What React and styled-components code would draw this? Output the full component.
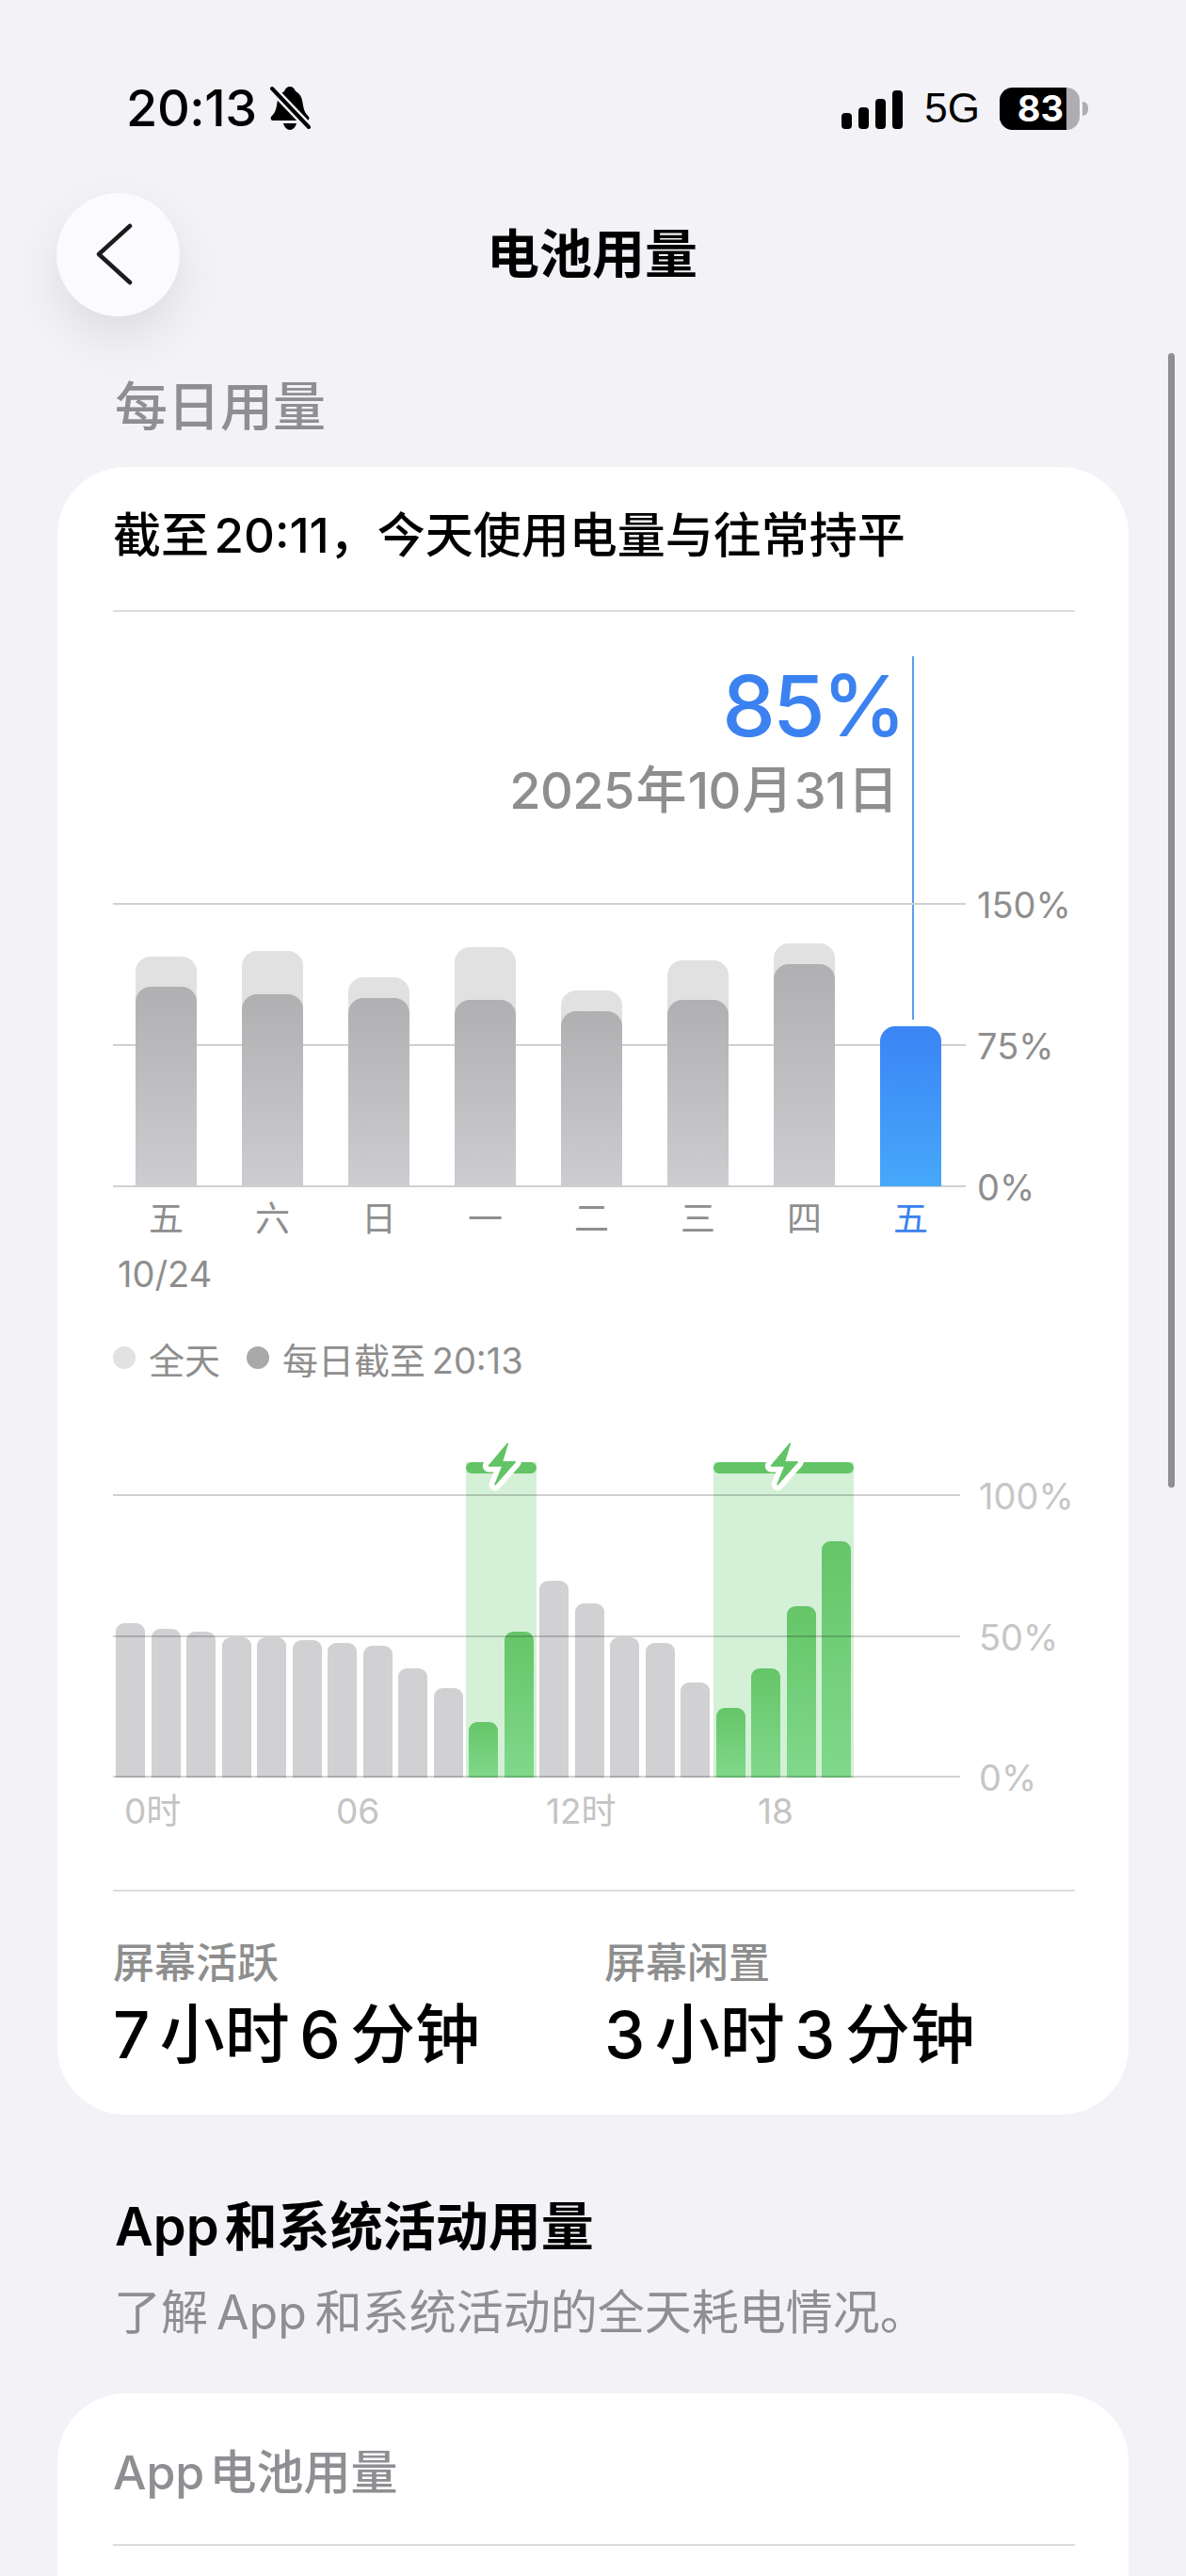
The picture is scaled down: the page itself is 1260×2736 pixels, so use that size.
import React from 'react';
import styled, { createGlobalStyle } from 'styled-components';

const Global = createGlobalStyle`
  html, body { margin: 0; padding: 0; background: #f2f2f7; }
  * { box-sizing: border-box; }
`;

const FONT = `Inter, "Noto Sans CJK SC", "Noto Sans", sans-serif`;

const Page = styled.div`
  position: relative;
  width: 1260px;
  height: 2736px;
  overflow: hidden;
  background: #f2f2f7;
  font-family: ${FONT};
  color: #000;
`;

const StatusBar = styled.div`
  height: 204px;
  padding: 92px 104px 0 134px;
  display: flex;
  justify-content: space-between;
  align-items: flex-start;
`;
const TimeGroup = styled.div`
  display: flex;
  align-items: center;
  gap: 13px;
  height: 46px;
`;
const Clock = styled.span`
  font-size: 54px;
  font-weight: 500;
  line-height: 46px;
  letter-spacing: -0.4px;
`;
const StatusRight = styled.div`
  display: flex;
  align-items: center;
  height: 46px;
`;
const Signal = styled.div`
  display: flex;
  align-items: flex-end;
  gap: 7px;
  height: 41px;
  margin-top: 2px;
`;
const SignalBar = styled.span`
  width: 11px;
  height: ${p => p.$h}px;
  background: #000;
  border-radius: 4px;
`;
const NetLabel = styled.span`
  font-family: "Liberation Sans", Inter, sans-serif;
  font-size: 44px;
  line-height: 46px;
  margin: 0 21px 0 23px;
  font-weight: 400;
`;
const Battery = styled.div`
  position: relative;
  display: flex;
  width: 85px;
  height: 45px;
  border-radius: 14px;
  overflow: hidden;
  background: #aeaeb2;
`;
const BatteryFill = styled.div`
  width: 71px;
  height: 100%;
  background: #000;
  color: #fff;
  font-size: 38px;
  font-weight: 700;
  line-height: 45px;
  text-align: right;
  padding-right: 3px;
  white-space: nowrap;
`;
const BatteryNub = styled.span`
  width: 6px;
  height: 15px;
  margin-left: 3px;
  background: #aeaeb2;
  border-radius: 0 7px 7px 0;
`;

const NavBar = styled.div`
  position: relative;
  height: 132px;
  padding-left: 60px;
  display: flex;
  align-items: center;
`;
const BackButton = styled.div`
  width: 131px;
  height: 131px;
  border-radius: 50%;
  background: #fbfbfe;
  padding-right: 8px;
  display: flex;
  align-items: center;
  justify-content: center;
  box-shadow: 0 22px 50px rgba(0, 0, 0, 0.09);
`;
const Title = styled.div`
  flex: 1;
  margin-left: -131px;
  margin-right: 62px;
  text-align: center;
  font-size: 56px;
  font-weight: 600;
  line-height: 70px;
`;

const SectionLabel = styled.div`
  margin: 62px 0 0 122px;
  height: 68px;
  font-size: 56px;
  font-weight: 500;
  line-height: 68px;
  color: #8e8e93;
`;

const Card = styled.div`
  width: 1138px;
  margin: 0 0 0 61px;
  padding: 0 57px 0 59px;
  background: #fff;
  border-radius: 72px;
`;
const MainCard = styled(Card)`
  margin-top: 30px;
  height: 1750px;
`;
const CardHeading = styled.div`
  height: 152px;
  padding-bottom: 14px;
  display: flex;
  align-items: center;
  font-size: 51px;
  font-weight: 500;
  word-spacing: -8px;
  white-space: nowrap;
`;
const Divider = styled.div`
  height: 2px;
  background: #dcdcde;
`;

const WeekSection = styled.div`
  position: relative;
  margin-top: 47px;
`;
const Callout = styled.div`
  height: 262px;
  width: 840px;
  text-align: right;
  white-space: nowrap;
`;
const Percent = styled.div`
  font-size: 90px;
  font-weight: 500;
  line-height: 106px;
  color: #3b82f0;
  letter-spacing: -3px;
`;
const DateText = styled.div`
  font-size: 54px;
  font-weight: 500;
  line-height: 66px;
  margin-top: 4px;
  color: #8e8e8e;
  padding-right: 6px;
  word-spacing: -12px;
  letter-spacing: -0.6px;
`;
const Marker = styled.div`
  position: absolute;
  left: 849px;
  top: 0;
  width: 2px;
  height: 386px;
  background: #5a9fee;
`;
const Plot = styled.div`
  position: relative;
  height: 301px;
  width: ${p => p.$w}px;
  display: flex;
  align-items: flex-end;
  gap: ${p => p.$gap}px;
  padding-left: ${p => p.$pad}px;
`;
const GridLine = styled.div`
  position: absolute;
  left: 0;
  right: 0;
  top: ${p => p.$y}px;
  height: 2px;
  background: ${p => p.$color};
  z-index: ${p => p.$z};
`;
const AxisLabel = styled.span`
  position: absolute;
  left: calc(100% + ${p => p.$gap}px);
  top: -21px;
  font-size: 38px;
  line-height: 46px;
  white-space: nowrap;
  color: ${p => p.$color};
`;
const DayBar = styled.div`
  position: relative;
  z-index: 1;
  width: 65px;
  height: ${p => p.$h}px;
  border-radius: 16px 16px 0 0;
  background: #e1e1e1;
  display: flex;
  align-items: flex-end;
`;
const DayFill = styled.div`
  width: 100%;
  height: ${p => p.$h}px;
  border-radius: 16px 16px 0 0;
  background: ${p => p.$today
    ? 'linear-gradient(180deg, #3b84f5 0%, #46a8fa 100%)'
    : 'linear-gradient(180deg, #b0b0b2 0%, #cdcdd1 100%)'};
`;
const DayRow = styled.div`
  display: flex;
  width: 906px;
  padding-left: 24px;
  gap: 48px;
  margin-top: 12px;
`;
const DayName = styled.span`
  width: 65px;
  text-align: center;
  font-size: 37px;
  line-height: 46px;
  color: ${p => (p.$today ? '#3b82f0' : '#8e8e8e')};
`;
const DateTick = styled.div`
  margin: 12px 0 0 5px;
  font-size: 38px;
  line-height: 46px;
  color: #8e8e8e;
`;
const Legend = styled.div`
  display: flex;
  align-items: center;
  margin-top: 43px;
  height: 46px;
`;
const LegendItem = styled.div`
  display: flex;
  align-items: center;
  gap: 14px;
  margin-right: 28px;
  font-size: 38px;
  color: #8e8e8e;
  word-spacing: -4px;
`;
const Dot = styled.span`
  width: 24px;
  height: 24px;
  border-radius: 50%;
  background: ${p => p.$color};
`;

const HourSection = styled.div`
  margin-top: 122px;
`;
const HourBar = styled.div`
  position: relative;
  z-index: 1;
  width: 31px;
  height: ${p => p.$h}px;
  border-radius: 9px 9px 0 0;
  background: ${p => (p.$green
    ? 'linear-gradient(180deg, #65c568 0%, #80d98b 100%)'
    : '#d1d1d3')};
`;
const ChargeRegion = styled.div`
  position: absolute;
  left: ${p => p.$x}px;
  width: ${p => p.$w}px;
  top: -34px;
  bottom: 0;
  background: #d4f0d7;
`;
const ChargeCap = styled.div`
  height: 12px;
  border-radius: 6px;
  background: #62c466;
`;
const BoltWrap = styled.svg`
  position: absolute;
  left: ${p => p.$x}px;
  top: -24px;
  width: 40px;
  height: 54px;
  overflow: visible;
`;
const HourTicks = styled.div`
  display: grid;
  grid-template-columns: 225px 223px 225px auto;
  width: 900px;
  padding-left: 12px;
  margin-top: 13px;
  font-size: 37px;
  line-height: 46px;
  color: #c4c4c4;
`;

const StatDivider = styled(Divider)`
  margin-top: 60px;
`;
const Stats = styled.div`
  display: grid;
  grid-template-columns: 522px 1fr;
  margin-top: 50px;
`;
const StatLabel = styled.div`
  font-size: 44px;
  line-height: 52px;
  font-weight: 500;
  color: #8e8e8e;
`;
const StatValue = styled.div`
  font-size: 69px;
  line-height: 84px;
  font-weight: 500;
  margin-top: 8px;
  white-space: nowrap;
  word-spacing: -8px;
`;

const BlockHeading = styled.div`
  margin: 84px 0 0 122px;
  font-size: 56px;
  line-height: 70px;
  font-weight: 600;
  word-spacing: -8px;
`;
const BlockSub = styled.div`
  margin: 24px 0 0 121px;
  font-size: 50px;
  line-height: 64px;
  color: #8e8e93;
  word-spacing: -5px;
`;
const AppCard = styled(Card)`
  margin-top: 54px;
  height: 400px;
`;
const AppCardTitle = styled.div`
  height: 160px;
  display: flex;
  align-items: center;
  font-size: 50px;
  font-weight: 500;
  color: #8e8e93;
  word-spacing: -8px;
`;
const ScrollIndicator = styled.div`
  position: absolute;
  left: 1241px;
  top: 375px;
  width: 7px;
  height: 1205px;
  border-radius: 4px;
  background: #8e8e93;
`;

const week = [
  ['五', 244, 212], ['六', 250, 204], ['日', 222, 200], ['一', 254, 198],
  ['二', 208, 186], ['三', 240, 198], ['四', 258, 236],
];
const hours = [162, 156, 153, 147, 147, 144, 141, 138, 114, 93, 57, 153, 207, 183, 147, 141, 99, 72, 114, 180, 249];
const greens = new Set([10, 11, 17, 18, 19, 20]);

function Bolt({ x }) {
  const d = 'M24.3 4.3 L4.3 28 L19 28 L11 47.7 L32.3 23.7 L18.3 23.7 Z';
  return (
    <BoltWrap $x={x} viewBox="0 0 40 54">
      <path d={d} fill="#fff" stroke="#fff" strokeWidth="13" strokeLinejoin="round" />
      <path d={d} fill="#62c466" stroke="#62c466" strokeWidth="1.5" strokeLinejoin="round" />
    </BoltWrap>
  );
}

export default function App() {
  return (
    <Page>
      <Global />
      <ScrollIndicator />
      <StatusBar>
        <TimeGroup>
          <Clock>20:13</Clock>
          <svg width="44" height="48" viewBox="0 0 44 48">
            <path d="M22 1c-3 0-5 2-6 5C10 9 9 14 8 21c-1 6-3 9-6 12-1 2 0 4 2 4h36c2 0 3-2 2-4-3-3-5-6-6-12-1-7-2-12-8-15-1-3-3-5-6-5z" fill="#000" />
            <path d="M15 40h14c-1 4-4 7-7 7s-6-3-7-7z" fill="#000" />
            <path d="M1 1 L43 45" stroke="#f2f2f7" strokeWidth="9" />
            <path d="M3 3 L42 44" stroke="#000" strokeWidth="4" strokeLinecap="round" />
          </svg>
        </TimeGroup>
        <StatusRight>
          <Signal>
            <SignalBar $h={17} />
            <SignalBar $h={23} />
            <SignalBar $h={32} />
            <SignalBar $h={41} />
          </Signal>
          <NetLabel>5G</NetLabel>
          <Battery>
            <BatteryFill>83</BatteryFill>
          </Battery>
          <BatteryNub />
        </StatusRight>
      </StatusBar>

      <NavBar>
        <BackButton>
          <svg width="44" height="70" viewBox="0 0 44 70">
            <path d="M38 5 L5 35 L38 65" fill="none" stroke="#1c1c1e" strokeWidth="4.5" strokeLinecap="round" strokeLinejoin="round" />
          </svg>
        </BackButton>
        <Title>电池用量</Title>
      </NavBar>

      <SectionLabel>每日用量</SectionLabel>

      <MainCard>
        <CardHeading>截至 20:11，今天使用电量与往常持平</CardHeading>
        <Divider />

        <WeekSection>
          <Marker />
          <Callout>
            <Percent>85%</Percent>
            <DateText>2025 年 10 月 31 日</DateText>
          </Callout>
          <Plot $w={906} $gap={48} $pad={24}>
            <GridLine $y={0} $color="#d0d0d0" $z={0}><AxisLabel $gap={12} $color="#8e8e8e">150%</AxisLabel></GridLine>
            <GridLine $y={150} $color="#d0d0d0" $z={0}><AxisLabel $gap={12} $color="#8e8e8e">75%</AxisLabel></GridLine>
            <GridLine $y={300} $color="#d0d0d0" $z={0}><AxisLabel $gap={12} $color="#8e8e8e">0%</AxisLabel></GridLine>
            {week.map(([name, a, b], i) => (
              <DayBar key={i} $h={a}><DayFill $h={b} /></DayBar>
            ))}
            <DayBar $h={170}><DayFill $h={170} $today /></DayBar>
          </Plot>
          <DayRow>
            {week.map(([name], i) => <DayName key={i}>{name}</DayName>)}
            <DayName $today>五</DayName>
          </DayRow>
          <DateTick>10/24</DateTick>
        </WeekSection>

        <Legend>
          <LegendItem><Dot $color="#e2e2e2" />全天</LegendItem>
          <LegendItem><Dot $color="#a9a9ab" />每日截至 20:13</LegendItem>
        </Legend>

        <HourSection>
          <Plot $w={900} $gap={6.5} $pad={3}>
            <ChargeRegion $x={375} $w={75}><ChargeCap /><Bolt x={20} /></ChargeRegion>
            <ChargeRegion $x={638} $w={149}><ChargeCap /><Bolt x={57} /></ChargeRegion>
            <GridLine $y={0} $color="rgba(0,0,0,0.18)" $z={2}><AxisLabel $gap={20} $color="#c6c6c6">100%</AxisLabel></GridLine>
            <GridLine $y={150} $color="rgba(0,0,0,0.18)" $z={2}><AxisLabel $gap={20} $color="#c6c6c6">50%</AxisLabel></GridLine>
            <GridLine $y={299} $color="rgba(0,0,0,0.18)" $z={2}><AxisLabel $gap={20} $color="#c6c6c6">0%</AxisLabel></GridLine>
            {hours.map((h, i) => <HourBar key={i} $h={h + 2} $green={greens.has(i)} />)}
          </Plot>
          <HourTicks>
            <span>0时</span><span>06</span><span>12时</span><span>18</span>
          </HourTicks>
        </HourSection>

        <StatDivider />
        <Stats>
          <div>
            <StatLabel>屏幕活跃</StatLabel>
            <StatValue>7 小时 6 分钟</StatValue>
          </div>
          <div>
            <StatLabel>屏幕闲置</StatLabel>
            <StatValue>3 小时 3 分钟</StatValue>
          </div>
        </Stats>
      </MainCard>

      <BlockHeading>App 和系统活动用量</BlockHeading>
      <BlockSub>了解 App 和系统活动的全天耗电情况。</BlockSub>

      <AppCard>
        <AppCardTitle>App 电池用量</AppCardTitle>
        <Divider />
      </AppCard>
    </Page>
  );
}
